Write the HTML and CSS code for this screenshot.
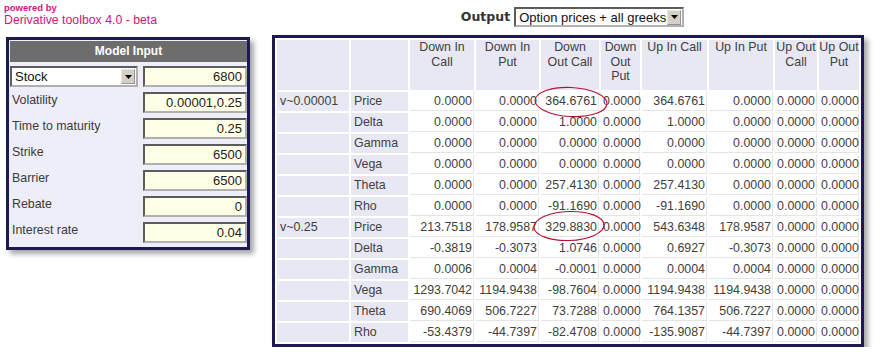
FILE: index.html
```html
<!DOCTYPE html>
<html lang="en">
<head>
    <meta charset="UTF-8">
    <title>Derivative toolbox 4.0 - beta</title>
    <link rel="stylesheet" href="styles.css">
</head>
<body>
    <div class="page">
        <!-- Branding -->
        <div class="brand">
            <span class="brand-small">powered by</span>
            <span class="brand-name">Derivative toolbox 4.0 - beta</span>
        </div>

        <!-- Output selector -->
        <div class="output-bar">
            <span class="output-label">Output</span>
            <div class="select select-output">
                <span>Option prices + all greeks</span>
                <span class="select-arrow"><svg width="7" height="4" viewBox="0 0 7 4"><path d="M0 0h7L3.5 4z" fill="#000"/></svg></span>
            </div>
        </div>

        <!-- Model input panel -->
        <div class="panel panel-left">
            <div class="panel-title">Model Input</div>
            <div class="fields">
                <div class="select select-stock">
                    <span>Stock</span>
                    <span class="select-arrow"><svg width="7" height="4" viewBox="0 0 7 4"><path d="M0 0h7L3.5 4z" fill="#000"/></svg></span>
                </div>
                <input class="field-input" type="text" value="6800">

                <label class="field-label" for="vol">Volatility</label>
                <input class="field-input" id="vol" type="text" value="0.00001,0.25">

                <label class="field-label" for="ttm">Time to maturity</label>
                <input class="field-input" id="ttm" type="text" value="0.25">

                <label class="field-label" for="strike">Strike</label>
                <input class="field-input" id="strike" type="text" value="6500">

                <label class="field-label" for="barrier">Barrier</label>
                <input class="field-input" id="barrier" type="text" value="6500">

                <label class="field-label" for="rebate">Rebate</label>
                <input class="field-input" id="rebate" type="text" value="0">

                <label class="field-label" for="rate">Interest rate</label>
                <input class="field-input" id="rate" type="text" value="0.04">
            </div>
        </div>

        <!-- Output table -->
        <div class="panel panel-right">
            <table class="results">
                <colgroup>
                    <col style="width:72px"><col style="width:57px"><col style="width:64px"><col style="width:63px"><col style="width:58px">
                    <col style="width:39px"><col style="width:65px"><col style="width:64px"><col style="width:42px"><col style="width:40px">
                </colgroup>
                <tr class="head-row">
                    <th></th><th></th>
                    <th>Down In<br>Call</th>
                    <th>Down In<br>Put</th>
                    <th>Down<br>Out Call</th>
                    <th>Down<br>Out<br>Put</th>
                    <th>Up In Call</th>
                    <th>Up In Put</th>
                    <th>Up Out<br>Call</th>
                    <th>Up Out<br>Put</th>
                </tr>
                <tr><td class="lbl">v~0.00001</td><td class="lbl">Price</td><td class="num">0.0000</td><td class="num">0.0000</td><td class="num">364.6761</td><td class="num">0.0000</td><td class="num">364.6761</td><td class="num">0.0000</td><td class="num">0.0000</td><td class="num">0.0000</td></tr>
                <tr><td class="lbl"></td><td class="lbl">Delta</td><td class="num">0.0000</td><td class="num">0.0000</td><td class="num">1.0000</td><td class="num">0.0000</td><td class="num">1.0000</td><td class="num">0.0000</td><td class="num">0.0000</td><td class="num">0.0000</td></tr>
                <tr><td class="lbl"></td><td class="lbl">Gamma</td><td class="num">0.0000</td><td class="num">0.0000</td><td class="num">0.0000</td><td class="num">0.0000</td><td class="num">0.0000</td><td class="num">0.0000</td><td class="num">0.0000</td><td class="num">0.0000</td></tr>
                <tr><td class="lbl"></td><td class="lbl">Vega</td><td class="num">0.0000</td><td class="num">0.0000</td><td class="num">0.0000</td><td class="num">0.0000</td><td class="num">0.0000</td><td class="num">0.0000</td><td class="num">0.0000</td><td class="num">0.0000</td></tr>
                <tr><td class="lbl"></td><td class="lbl">Theta</td><td class="num">0.0000</td><td class="num">0.0000</td><td class="num">257.4130</td><td class="num">0.0000</td><td class="num">257.4130</td><td class="num">0.0000</td><td class="num">0.0000</td><td class="num">0.0000</td></tr>
                <tr><td class="lbl"></td><td class="lbl">Rho</td><td class="num">0.0000</td><td class="num">0.0000</td><td class="num">-91.1690</td><td class="num">0.0000</td><td class="num">-91.1690</td><td class="num">0.0000</td><td class="num">0.0000</td><td class="num">0.0000</td></tr>
                <tr><td class="lbl">v~0.25</td><td class="lbl">Price</td><td class="num">213.7518</td><td class="num">178.9587</td><td class="num">329.8830</td><td class="num">0.0000</td><td class="num">543.6348</td><td class="num">178.9587</td><td class="num">0.0000</td><td class="num">0.0000</td></tr>
                <tr><td class="lbl"></td><td class="lbl">Delta</td><td class="num">-0.3819</td><td class="num">-0.3073</td><td class="num">1.0746</td><td class="num">0.0000</td><td class="num">0.6927</td><td class="num">-0.3073</td><td class="num">0.0000</td><td class="num">0.0000</td></tr>
                <tr><td class="lbl"></td><td class="lbl">Gamma</td><td class="num">0.0006</td><td class="num">0.0004</td><td class="num">-0.0001</td><td class="num">0.0000</td><td class="num">0.0004</td><td class="num">0.0004</td><td class="num">0.0000</td><td class="num">0.0000</td></tr>
                <tr><td class="lbl"></td><td class="lbl">Vega</td><td class="num">1293.7042</td><td class="num">1194.9438</td><td class="num">-98.7604</td><td class="num">0.0000</td><td class="num">1194.9438</td><td class="num">1194.9438</td><td class="num">0.0000</td><td class="num">0.0000</td></tr>
                <tr><td class="lbl"></td><td class="lbl">Theta</td><td class="num">690.4069</td><td class="num">506.7227</td><td class="num">73.7288</td><td class="num">0.0000</td><td class="num">764.1357</td><td class="num">506.7227</td><td class="num">0.0000</td><td class="num">0.0000</td></tr>
                <tr><td class="lbl"></td><td class="lbl">Rho</td><td class="num">-53.4379</td><td class="num">-44.7397</td><td class="num">-82.4708</td><td class="num">0.0000</td><td class="num">-135.9087</td><td class="num">-44.7397</td><td class="num">0.0000</td><td class="num">0.0000</td></tr>
            </table>

            <!-- Hand-drawn highlights -->
            <svg class="marks" width="586" height="306" viewBox="0 0 586 306">
                <ellipse cx="296" cy="64" rx="36" ry="14.5" transform="rotate(3 296 64)" fill="none" stroke="#b5122f" stroke-width="1.1"/>
                <ellipse cx="294" cy="188" rx="35" ry="14.5" transform="rotate(-2 294 188)" fill="none" stroke="#b5122f" stroke-width="1.1"/>
            </svg>
        </div>
    </div>
</body>
</html>
```

FILE: styles.css
```css
body {
    margin: 0;
    padding: 0;
    background-color: #fff;
    color: #333;
    font-family: "Liberation Sans", Arial, sans-serif;
}

.page {
    display: grid;
    grid-template-columns: 244px 592px;
    grid-template-rows: 35px auto;
    column-gap: 22px;
    padding-left: 6px;
}

/* Branding */
.brand {
    color: #d2157a;
    margin-left: -2px;
    padding-top: 2px;
}

.brand-small {
    display: block;
    font-size: 9.5px;
    font-weight: bold;
    line-height: 11px;
}

.brand-name {
    display: block;
    font-size: 12.3px;
    line-height: 15px;
}

/* Output selector */
.output-bar {
    display: flex;
    justify-content: center;
    align-items: flex-start;
    gap: 4px;
    padding: 7px 0 0 9px;
}

.output-label {
    font-family: "DejaVu Sans", Verdana, sans-serif;
    font-weight: bold;
    font-size: 12.5px;
    line-height: 20px;
    color: #333;
}

/* Fake select boxes */
.select {
    display: flex;
    justify-content: space-between;
    align-items: center;
    box-sizing: border-box;
    height: 21px;
    border: 2px inset #b0b0b0;
    background-color: #fff;
    color: #111;
    font-size: 13px;
    padding-left: 3px;
}

.select-output {
    width: 170px;
    height: 20px;
}

.select-arrow {
    display: flex;
    justify-content: center;
    align-items: center;
    box-sizing: border-box;
    width: 14px;
    height: 15px;
    margin-right: 1px;
    background-color: #d4d0c8;
    border: 1px outset #e8e6e0;
}

/* Panels */
.panel {
    border: 3px solid #1b1b52;
    box-shadow: 4px 4px 5px rgba(0, 0, 0, 0.35);
    align-self: start;
}

.panel-left {
    margin-top: 2px;
    background-color: #eeeef8;
    padding: 1px 0 4px 1px;
}

.panel-title {
    height: 21px;
    line-height: 21px;
    background-color: #6d6d6d;
    color: #fff;
    font-weight: bold;
    font-size: 12px;
    text-align: center;
}

.fields {
    display: grid;
    grid-template-columns: 128px 104px;
    column-gap: 5px;
    row-gap: 5px;
    margin-top: 4px;
}

.field-label {
    font-size: 12.4px;
    line-height: 16px;
    padding-left: 2px;
    color: #3a3a3a;
}

.field-input {
    box-sizing: border-box;
    width: 104px;
    height: 21px;
    margin: 0;
    padding: 0 3px;
    border: 2px inset #b0b0b0;
    background-color: #ffffe8;
    color: #222;
    font-family: "Liberation Sans", Arial, sans-serif;
    font-size: 13px;
    text-align: right;
}

/* Results table */
.panel-right {
    position: relative;
    background-color: #fff;
}

.results {
    table-layout: fixed;
    width: 586px;
    border-spacing: 2px;
    font-size: 12.4px;
    color: #404040;
}

.results th {
    box-sizing: border-box;
    height: 50px;
    padding: 0;
    vertical-align: top;
    text-align: center;
    font-weight: normal;
    line-height: 14.5px;
    white-space: nowrap;
    background-color: #e8e8f5;
}

.results td {
    box-sizing: border-box;
    height: 19px;
    padding: 0 2px;
    line-height: 17px;
    white-space: nowrap;
}

.results .lbl {
    background-color: #e8e8f5;
    padding-left: 3px;
}

.results .num {
    text-align: right;
    border-right: 1px solid #e4e4e4;
    border-bottom: 1px solid #e4e4e4;
    padding-right: 1px;
}

.marks {
    position: absolute;
    left: 0;
    top: 0;
    pointer-events: none;
}
```
